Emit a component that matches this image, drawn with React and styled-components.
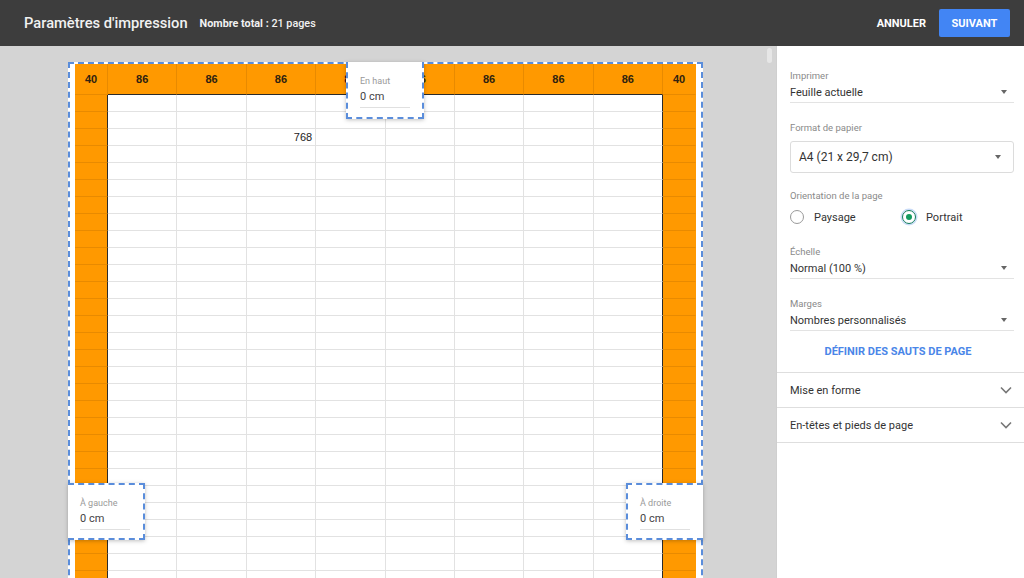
import React from "react";
import styled, { createGlobalStyle } from "styled-components";

const Global = createGlobalStyle`
  html, body { margin: 0; padding: 0; }
  body { font-family: Roboto, "Noto Sans", Arial, sans-serif; overflow: hidden; }
  * { box-sizing: border-box; }
`;

const ORANGE = "#ff9900";
const ORANGE_LINE = "#e88a00";
const DARK = "#2b2b2b";
const GRID = "#e2e2e2";
const DASH = "#5a8ddb";

const Shell = styled.div`
  width: 1024px;
  height: 578px;
  display: flex;
  flex-direction: column;
  overflow: hidden;
`;

const TopBar = styled.header`
  height: 46px;
  flex-shrink: 0;
  background: #3d3d3d;
  display: flex;
  align-items: center;
  padding: 0 14px 0 24px;
  color: #f1f1f1;
`;

const Title = styled.h1`
  margin: 0;
  font-size: 14.7px;
  font-weight: 500;
`;

const Count = styled.span`
  margin-left: 12px;
  font-size: 10.8px;
  font-weight: 500;
  b { font-weight: 700; }
`;

const Spacer = styled.div`
  flex: 1;
`;

const TextButton = styled.button`
  background: none;
  border: none;
  color: #fff;
  font: 700 11px Roboto, sans-serif;
  text-transform: uppercase;
  padding: 0;
  margin-right: 13px;
  cursor: pointer;
`;

const PrimaryButton = styled.button`
  background: #4285f4;
  border: none;
  border-radius: 2px;
  color: #fff;
  font: 700 11px Roboto, sans-serif;
  text-transform: uppercase;
  width: 71px;
  height: 28px;
  cursor: pointer;
`;

const Main = styled.div`
  flex: 1;
  display: flex;
  min-height: 0;
`;

const Preview = styled.div`
  position: relative;
  width: 776px;
  flex-shrink: 0;
  background: #d4d4d4;
  padding: 16px 0 0 68px;
  overflow: hidden;
`;

const ScrollThumb = styled.div`
  position: absolute;
  top: 2px;
  right: 4px;
  width: 5px;
  height: 15px;
  border-radius: 3px;
  background: #e6e6e6;
`;

const Page = styled.div`
  position: relative;
  width: 635px;
  background: #fff;
  border: 2px dashed ${DASH};
  border-bottom: none;
  padding: 0 5px;
`;

const Sheet = styled.div`
  display: grid;
  grid-template-columns: 33px repeat(8, 69.375px) 33px;
  grid-template-rows: 31px;
  grid-auto-rows: 17px;
  font-family: "Liberation Sans", Arial, sans-serif;
`;

const Cell = styled.div`
  display: flex;
  align-items: center;
  justify-content: ${(p) => (p.$head ? "center" : "flex-end")};
  padding-right: ${(p) => (p.$head ? 0 : 3)}px;
  font-size: 11px;
  font-weight: ${(p) => (p.$head ? 700 : 400)};
  color: ${(p) => (p.$head ? "#2e2210" : "#222")};
  background: ${(p) => (p.$orange ? ORANGE : "#fff")};
  border-right: 1px solid ${(p) => p.$right};
  border-bottom: 1px solid ${(p) => p.$bottom};
`;

const MarginBox = styled.div`
  position: absolute;
  background: #fff;
  border: 2px dashed ${DASH};
  box-shadow: 0 1px 4px rgba(0, 0, 0, 0.25);
  padding: ${(p) => p.$pad};
  display: flex;
  flex-direction: column;
`;

const TopBox = styled(MarginBox)`
  top: -2px;
  left: 276px;
  width: 78px;
  height: 57px;
  border-top: none;
`;

const LeftBox = styled(MarginBox)`
  top: 419px;
  left: -2px;
  width: 77px;
  height: 57px;
  border-left: none;
`;

const RightBox = styled(MarginBox)`
  top: 419px;
  right: -2px;
  width: 77px;
  height: 57px;
  border-right: none;
`;

const BoxLabel = styled.span`
  font-size: 9px;
  color: #999;
  line-height: 11px;
`;

const BoxValue = styled.span`
  font-size: 11px;
  color: #444;
  line-height: 14px;
  margin-top: 3px;
  padding-bottom: 3px;
  width: 50px;
  border-bottom: 1px solid #e0e0e0;
`;

const Panel = styled.aside`
  flex: 1;
  background: #fff;
  border-left: 1px solid #cfcfcf;
  display: flex;
  flex-direction: column;
`;

const Settings = styled.div`
  padding: 24px 17px 0 13px;
  display: flex;
  flex-direction: column;
`;

const Field = styled.div`
  margin-top: ${(p) => p.$gap || 0}px;
  display: flex;
  flex-direction: column;
`;

const Label = styled.span`
  font-size: 9.5px;
  line-height: 12px;
  color: #8a8a8a;
`;

const Select = styled.div`
  height: 21px;
  display: flex;
  align-items: center;
  justify-content: space-between;
  padding-right: 7px;
  font-size: 11px;
  color: #333;
  border-bottom: 1px solid #e3e3e3;
`;

const BoxSelect = styled.div`
  margin-top: 7px;
  height: 32px;
  display: flex;
  align-items: center;
  justify-content: space-between;
  padding: 0 12px 0 8px;
  font-size: 12px;
  color: #333;
  border: 1px solid #dcdcdc;
  border-radius: 3px;
`;

const Caret = styled.span`
  width: 0;
  height: 0;
  border-left: 3.5px solid transparent;
  border-right: 3.5px solid transparent;
  border-top: 4px solid #666;
`;

const Radios = styled.div`
  margin-top: 5px;
  height: 20px;
  display: flex;
  align-items: center;
`;

const RadioItem = styled.label`
  width: 112px;
  display: flex;
  align-items: center;
  gap: 10px;
  font-size: 11px;
  color: #333;
`;

const RadioCircle = styled.span`
  width: 14px;
  height: 14px;
  border-radius: 50%;
  border: 1.5px solid ${(p) => (p.$on ? "#0f7a5a" : "#9a9a9a")};
  display: flex;
  align-items: center;
  justify-content: center;
  box-shadow: ${(p) => (p.$on ? "0 0 0 1.5px #c9dbf7" : "none")};
  &::after {
    content: "";
    width: 6px;
    height: 6px;
    border-radius: 50%;
    background: ${(p) => (p.$on ? "#129b5f" : "transparent")};
  }
`;

const LinkButton = styled.button`
  margin: 14px 8px 0 0;
  align-self: center;
  background: none;
  border: none;
  color: #4a86e8;
  font: 700 11px/13px Roboto, sans-serif;
  text-transform: uppercase;
  padding: 0 0 14px;
  cursor: pointer;
`;

const Section = styled.div`
  height: ${(p) => p.$h}px;
  border-top: 1px solid #dedede;
  display: flex;
  align-items: center;
  justify-content: space-between;
  padding: 0 19px 0 13px;
  font-size: 11px;
  color: #333;
  &:last-child { border-bottom: 1px solid #dedede; }
`;

const Chevron = () => (
  <svg width="12" height="8" viewBox="0 0 12 8">
    <path d="M1 1.5 L6 6.5 L11 1.5" fill="none" stroke="#777" strokeWidth="1.6" />
  </svg>
);

const COLS = 10;
const ROWS = 30;
const HEAD = ["40", "86", "86", "86", "86", "86", "86", "86", "86", "40"];

function SheetGrid() {
  const cells = [];
  HEAD.forEach((t, c) => {
    const corner = c === 0 || c === COLS - 1;
    cells.push(
      <Cell
        key={`h${c}`}
        $head
        $orange
        $right={c === COLS - 1 ? ORANGE : ORANGE_LINE}
        $bottom={corner ? ORANGE_LINE : DARK}
      >
        {t}
      </Cell>
    );
  });
  for (let r = 0; r < ROWS; r++) {
    for (let c = 0; c < COLS; c++) {
      const side = c === 0 || c === COLS - 1;
      let right = GRID;
      if (c === 0 || c === COLS - 2) right = DARK;
      if (c === COLS - 1) right = ORANGE;
      cells.push(
        <Cell
          key={`${r}-${c}`}
          $orange={side}
          $right={right}
          $bottom={side ? ORANGE_LINE : GRID}
        >
          {r === 2 && c === 3 ? "768" : ""}
        </Cell>
      );
    }
  }
  return <Sheet>{cells}</Sheet>;
}

export default function App() {
  return (
    <Shell>
      <Global />
      <TopBar>
        <Title>Paramètres d'impression</Title>
        <Count>
          <b>Nombre total :</b> 21 pages
        </Count>
        <Spacer />
        <TextButton>Annuler</TextButton>
        <PrimaryButton>Suivant</PrimaryButton>
      </TopBar>
      <Main>
        <Preview>
          <ScrollThumb />
          <Page>
            <SheetGrid />
            <TopBox $pad="14px 12px 0 12px">
              <BoxLabel>En haut</BoxLabel>
              <BoxValue>0 cm</BoxValue>
            </TopBox>
            <LeftBox $pad="13px 12px 0 12px">
              <BoxLabel>À gauche</BoxLabel>
              <BoxValue>0 cm</BoxValue>
            </LeftBox>
            <RightBox $pad="13px 12px 0 12px">
              <BoxLabel>À droite</BoxLabel>
              <BoxValue>0 cm</BoxValue>
            </RightBox>
          </Page>
        </Preview>
        <Panel>
          <Settings>
            <Field>
              <Label>Imprimer</Label>
              <Select>
                Feuille actuelle
                <Caret />
              </Select>
            </Field>
            <Field $gap={19}>
              <Label>Format de papier</Label>
              <BoxSelect>
                A4 (21 x 29,7 cm)
                <Caret />
              </BoxSelect>
            </Field>
            <Field $gap={17}>
              <Label>Orientation de la page</Label>
              <Radios>
                <RadioItem>
                  <RadioCircle />
                  Paysage
                </RadioItem>
                <RadioItem>
                  <RadioCircle $on />
                  Portrait
                </RadioItem>
              </Radios>
            </Field>
            <Field $gap={19}>
              <Label>Échelle</Label>
              <Select>
                Normal (100 %)
                <Caret />
              </Select>
            </Field>
            <Field $gap={19}>
              <Label>Marges</Label>
              <Select>
                Nombres personnalisés
                <Caret />
              </Select>
            </Field>
            <LinkButton>Définir des sauts de page</LinkButton>
          </Settings>
          <div>
            <Section $h={35}>
              Mise en forme
              <Chevron />
            </Section>
            <Section $h={36}>
              En-têtes et pieds de page
              <Chevron />
            </Section>
          </div>
        </Panel>
      </Main>
    </Shell>
  );
}
